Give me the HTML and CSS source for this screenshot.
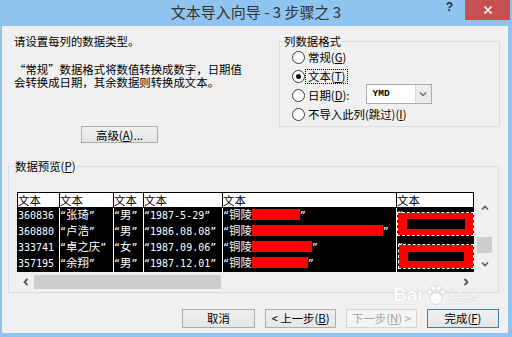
FILE: index.html
```html
<!DOCTYPE html>
<html lang="zh-CN">
<head>
<meta charset="utf-8">
<title>文本导入向导</title>
<link rel="stylesheet" href="styles.css">
</head>
<body>
<div class="window">
  <div class="titlebar">
    <div></div>
    <div class="title">文本导入向导 - 3 步骤之 3</div>
    <div class="controls">
      <span class="help">?</span>
      <span class="close"><svg width="10" height="10" viewBox="0 0 10 10"><path d="M1.5 1.5L8.5 8.5M8.5 1.5L1.5 8.5" stroke="#fff" stroke-width="1.6" fill="none"/></svg></span>
    </div>
  </div>
  <div class="client">
    <div class="top">
      <div class="intro">
        <p class="l1">请设置每列的数据类型。</p>
        <p class="l2">“常规”数据格式将数值转换成数字，日期值<br>会转换成日期，其余数据则转换成文本。</p>
        <button class="btn adv">高级(<u>A</u>)...</button>
      </div>
      <fieldset class="fmt">
        <legend>列数据格式</legend>
        <div class="opt"><span class="radio"></span><span class="lbl">常规(<u>G</u>)</span></div>
        <div class="opt"><span class="radio on"></span><span class="lbl focus">文本(<u>T</u>)</span></div>
        <div class="opt"><span class="radio"></span><span class="lbl">日期(<u>D</u>):</span>
          <span class="select"><span class="val">YMD</span><span class="arrow"><svg width="8" height="6" viewBox="0 0 8 6"><path d="M1 1.5L4 4.5L7 1.5" stroke="#707070" stroke-width="1.5" fill="none"/></svg></span></span>
        </div>
        <div class="opt"><span class="radio"></span><span class="lbl">不导入此列(跳过)(<u>I</u>)</span></div>
      </fieldset>
    </div>

    <fieldset class="pv">
      <legend>数据预览(<u>P</u>)</legend>
      <div class="pvarea">
        <div class="pvmain">
          <div class="grid">
            <div class="h">文本</div><div class="h">文本</div><div class="h">文本</div><div class="h">文本</div><div class="h">文本</div><div class="h last">文本</div>

            <div class="d first">360836</div><div class="d">“<span class="c">张琦</span>”</div><div class="d">“<span class="c">男</span>”</div><div class="d">“1987-5-29”</div><div class="d">“<span class="c">铜陵</span><span class="red r1"></span>”</div><div class="d">“</div>

            <div class="d first">360880</div><div class="d">“<span class="c">卢浩</span>”</div><div class="d">“<span class="c">男</span>”</div><div class="d">“1986.08.08”</div><div class="d">“<span class="c">铜陵</span><span class="red r2"></span>”</div><div class="d">“</div>

            <div class="d first">333741</div><div class="d">“<span class="c">卓之庆</span>”</div><div class="d">“<span class="c">女</span>”</div><div class="d">“1987.09.06”</div><div class="d">“<span class="c">铜陵</span><span class="red r3"></span>”</div><div class="d">“</div>

            <div class="d first">357195</div><div class="d">“<span class="c">余翔</span>”</div><div class="d">“<span class="c">男</span>”</div><div class="d">“1987.12.01”</div><div class="d">“<span class="c">铜陵</span><span class="red r4"></span>”</div><div class="d">“</div>

            <div class="redact b1"><i></i></div>
            <div class="redact b2"><i></i></div>
          </div>
          <div class="hscroll">
            <span class="sbtn"><svg width="6" height="8" viewBox="0 0 6 8"><path d="M4.5 1L1.5 4L4.5 7" stroke="#555" stroke-width="1.8" fill="none"/></svg></span>
            <span class="hthumb"></span>
            <span class="htrack"></span>
            <span class="sbtn"><svg width="6" height="8" viewBox="0 0 6 8"><path d="M1.5 1L4.5 4L1.5 7" stroke="#555" stroke-width="1.8" fill="none"/></svg></span>
          </div>
        </div>
        <div class="vscroll">
          <span class="vbtn"><svg width="8" height="6" viewBox="0 0 8 6"><path d="M1 4.5L4 1.5L7 4.5" stroke="#606060" stroke-width="1.6" fill="none"/></svg></span>
          <span class="vtrack"><span class="vthumb"></span></span>
          <span class="vbtn"><svg width="8" height="6" viewBox="0 0 8 6"><path d="M1 1.5L4 4.5L7 1.5" stroke="#606060" stroke-width="1.6" fill="none"/></svg></span>
        </div>
      </div>
    </fieldset>

    <div class="actions">
      <button class="btn w73">取消</button>
      <button class="btn w71">&lt; 上一步(<u>B</u>)</button>
      <button class="btn w71 disabled">下一步(<u>N</u>) &gt;</button>
      <button class="btn w72 default">完成(<u>F</u>)</button>
    </div>
  </div>

  <div class="watermark"><span class="wb">Bai</span><svg class="paw" width="22" height="20" viewBox="0 0 22 20"><circle cx="11" cy="13.5" r="6" fill="#fff" stroke="#cfcfcf" stroke-width="0.8"/><circle cx="4.5" cy="7" r="2.5" fill="#fff" stroke="#cfcfcf" stroke-width="0.8"/><circle cx="8.8" cy="3.2" r="2.5" fill="#fff" stroke="#cfcfcf" stroke-width="0.8"/><circle cx="13.5" cy="3.2" r="2.5" fill="#fff" stroke="#cfcfcf" stroke-width="0.8"/><circle cx="17.8" cy="7" r="2.5" fill="#fff" stroke="#cfcfcf" stroke-width="0.8"/></svg><span class="wj">经验</span></div>
</div>
</body>
</html>
```

FILE: styles.css
```css
* { box-sizing: border-box; }
html, body { margin: 0; padding: 0; }
body {
  width: 512px;
  height: 337px;
  overflow: hidden;
  font-family: "Noto Sans CJK SC", "Noto Sans", sans-serif;
  font-size: 11.4px;
  color: #000;
}
u { text-decoration: underline; text-underline-offset: 1px; }

.window {
  position: relative;
  width: 512px;
  height: 337px;
  background: #90c4f0;
  display: flex;
  flex-direction: column;
}

.titlebar {
  flex: none;
  height: 26px;
  display: grid;
  grid-template-columns: 1fr auto 1fr;
  align-items: start;
}
.title {
  font-size: 15px;
  line-height: 24px;
  color: #333;
  white-space: nowrap;
}
.controls {
  display: flex;
  justify-content: flex-end;
  align-items: flex-start;
}
.help {
  font: bold 12px/14px "Liberation Sans", sans-serif;
  color: #1c2f4d;
  margin-right: 12px;
}
.close {
  width: 45px;
  height: 20px;
  background: #c75050;
  display: flex;
  align-items: center;
  justify-content: center;
  margin-right: 2px;
}

.client {
  flex: 1;
  margin: 0 4px 4px 2px;
  background: #f0f0f0;
  display: flex;
  flex-direction: column;
}

.top {
  display: flex;
  align-items: flex-start;
  padding-top: 8px;
}
.intro {
  flex: 1;
  padding-left: 12px;
  display: flex;
  flex-direction: column;
  align-items: flex-start;
}
.intro p { margin: 0; white-space: nowrap; }
.l1 { line-height: 14px; }
.intro .l2 { line-height: 13px; margin-top: 15px; }

.btn {
  font-family: "Noto Sans CJK SC", "Noto Sans", sans-serif;
  font-size: 11.4px;
  line-height: 15px;
  color: #000;
  height: 19px;
  padding: 0;
  border: 1px solid #acacac;
  background: linear-gradient(#f0f0f0, #e5e5e5);
  white-space: nowrap;
}
.adv {
  width: 77px;
  height: 17px;
  line-height: 14px;
  margin-top: 37px;
  margin-left: 67px;
}

fieldset {
  margin: 0;
  min-width: 0;
  border: 1px solid #dcdcdc;
}
legend {
  padding: 0 1px;
  line-height: 14px;
}

.fmt {
  width: 221px;
  margin-right: 8px;
  padding: 0 0 2px 3px;
}
.opt {
  height: 19px;
  display: flex;
  align-items: center;
  margin-left: 9px;
  white-space: nowrap;
}
.radio {
  flex: none;
  width: 13px;
  height: 13px;
  border-radius: 50%;
  border: 1px solid #3c3c3c;
  background: #fff;
  margin-right: 1px;
  display: flex;
  align-items: center;
  justify-content: center;
}
.radio.on::after {
  content: "";
  width: 5px;
  height: 5px;
  border-radius: 50%;
  background: #111;
}
.lbl {
  padding: 0 2px;
  line-height: 13px;
}
.focus { outline: 1px dotted #000; outline-offset: 0; }

.select {
  margin-left: 14px;
  margin-bottom: 4px;
  width: 66px;
  height: 20px;
  border: 1px solid #abadb3;
  background: #fff;
  display: flex;
  align-items: stretch;
}
.val {
  flex: 1;
  font: bold 9.5px/18px "Liberation Mono", monospace;
  padding-left: 6px;
}
.arrow {
  width: 16px;
  border-left: 1px solid #d9d9d9;
  background: #ececec;
  display: flex;
  align-items: center;
  justify-content: center;
}

.pv {
  margin: 16px 9px 0 6px;
  padding: 19px 6px 3px 8px;
}
.pv legend { margin-left: -3px; }

.pvarea {
  display: flex;
  align-items: flex-start;
}
.pvmain {
  width: 457px;
  display: flex;
  flex-direction: column;
}
.grid {
  position: relative;
  display: grid;
  grid-template-columns: 42px 54px 30px 79px 174px 78px;
  grid-auto-rows: 16px;
  background: #000;
}
.h {
  background: #fff;
  border-top: 1px solid #000;
  border-bottom: 1px solid #000;
  border-left: 1px solid #000;
  line-height: 14px;
  white-space: nowrap;
}
.h.last { border-right: 1px solid #000; }
.d {
  border-left: 1px solid #fff;
  color: #fff;
  font: 10px/16px "DejaVu Sans Mono", monospace;
  white-space: nowrap;
}
.d.first { border-left-color: #000; }
.c {
  font-family: "Noto Sans CJK SC", sans-serif;
  font-size: 11.4px;
  line-height: 12px;
}
.red {
  display: inline-block;
  height: 11px;
  background: #ff0000;
  vertical-align: -1px;
}
.r1 { width: 48px; }
.r2 { width: 131px; }
.r3 { width: 60px; }
.r4 { width: 56px; }

.redact {
  position: absolute;
  background: #ff0000;
  outline: 1px dashed #fff;
}
.redact i { display: block; background: #000; }
.b1 { left: 381px; top: 21px; width: 75px; height: 22px; padding: 6px 8px 6px 9px; }
.b1 i { height: 10px; }
.b2 { left: 382px; top: 53px; width: 74px; height: 23px; padding: 7px 9px 7px 9px; }
.b2 i { height: 9px; }

.hscroll {
  margin-top: 3px;
  height: 14px;
  display: flex;
}
.sbtn {
  flex: none;
  width: 17px;
  display: flex;
  align-items: center;
  justify-content: center;
}
.hthumb { width: 187px; background: #cdcdcd; }
.htrack { flex: 1; }

.vscroll {
  margin-left: 2px;
  margin-top: 8px;
  width: 16px;
  height: 72px;
  display: flex;
  flex-direction: column;
}
.vbtn {
  height: 16px;
  display: flex;
  align-items: center;
  justify-content: center;
  padding-left: 2px;
}
.vtrack { flex: 1; }
.vthumb {
  display: block;
  margin: 21px 0 0 1px;
  width: 15px;
  height: 16px;
  background: #cdcdcd;
}

.actions {
  margin-top: 16px;
  padding-right: 9px;
  display: flex;
  justify-content: flex-end;
  gap: 10px;
}
.w73 { width: 73px; }
.w71 { width: 71px; }
.w72 { width: 72px; }
.disabled {
  color: #a3a3a3;
  border-color: #d5d5d5;
  background: #f4f4f4;
}
.default { border-color: #3c7fb1; }

.watermark {
  position: absolute;
  left: 393px;
  top: 285px;
  display: flex;
  align-items: flex-end;
  gap: 2px;
  color: #fff;
  opacity: 0.85;
  text-shadow: 0 0 1px #aaa;
  pointer-events: none;
}
.wb { font: bold 19px/20px "Liberation Sans", sans-serif; }
.wj { font-size: 15px; line-height: 18px; }
```
